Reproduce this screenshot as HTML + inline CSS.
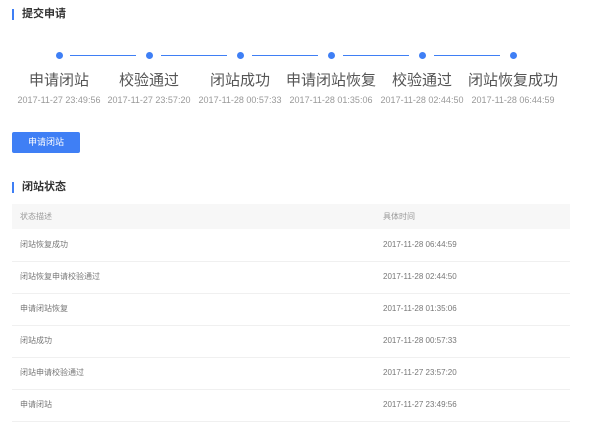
<!DOCTYPE html><html><head><meta charset="utf-8"><style>
body{margin:0;width:600px;height:430px;background:#fff;font-family:"Liberation Sans","Noto Sans CJK SC",sans-serif;position:relative;overflow:hidden}
.a{position:absolute}
.bar{position:absolute;left:12px;width:2px;height:11px;background:#3f7ff5}
.t{position:absolute;left:22px;font-size:11px;font-weight:bold;color:#333;line-height:14px}
.dot{position:absolute;width:7px;height:7px;border-radius:50%;background:#3f7ff5;top:52px}
.ln{position:absolute;height:1px;background:#3f7ff5;top:55px;width:66px}
.lb{position:absolute;width:120px;text-align:center;font-size:15px;color:#555;top:72px;line-height:18px}
.dt{position:absolute;width:120px;text-align:center;font-size:9px;color:#999;top:95px;line-height:11px}
.row{position:absolute;left:12px;width:558px;height:32px;border-bottom:1px solid #f0f0f0;font-size:8px;color:#777;line-height:32px}
.row span{position:absolute;left:8px}.row b{position:absolute;left:371px;font-weight:normal}
</style></head><body>
<div class="bar" style="top:9px"></div><div class="t" style="top:7px">提交申请</div>
<div class="dot" style="left:56px"></div><div class="dot" style="left:146px"></div><div class="dot" style="left:237px"></div><div class="dot" style="left:328px"></div><div class="dot" style="left:419px"></div><div class="dot" style="left:510px"></div>
<div class="ln" style="left:70px"></div><div class="ln" style="left:161px"></div><div class="ln" style="left:252px"></div><div class="ln" style="left:343px"></div><div class="ln" style="left:434px"></div>
<div class="lb" style="left:-1px">申请闭站</div><div class="lb" style="left:89px">校验通过</div><div class="lb" style="left:180px">闭站成功</div><div class="lb" style="left:271px">申请闭站恢复</div><div class="lb" style="left:362px">校验通过</div><div class="lb" style="left:453px">闭站恢复成功</div>
<div class="dt" style="left:-1px">2017-11-27 23:49:56</div><div class="dt" style="left:89px">2017-11-27 23:57:20</div><div class="dt" style="left:180px">2017-11-28 00:57:33</div><div class="dt" style="left:271px">2017-11-28 01:35:06</div><div class="dt" style="left:362px">2017-11-28 02:44:50</div><div class="dt" style="left:453px">2017-11-28 06:44:59</div>
<div class="a" style="left:12px;top:132px;width:68px;height:21px;background:#3f7ff5;border-radius:2px;color:#fff;font-size:9px;line-height:21px;text-align:center">申请闭站</div>
<div class="bar" style="top:182px"></div><div class="t" style="top:180px">闭站状态</div>
<div class="row" style="top:204px;height:25px;line-height:25px;background:#f7f7f7;border:none;color:#999"><span>状态描述</span><b>具体时间</b></div>
<div class="row" style="top:229px"><span>闭站恢复成功</span><b>2017-11-28 06:44:59</b></div>
<div class="row" style="top:261px"><span>闭站恢复申请校验通过</span><b>2017-11-28 02:44:50</b></div>
<div class="row" style="top:293px"><span>申请闭站恢复</span><b>2017-11-28 01:35:06</b></div>
<div class="row" style="top:325px"><span>闭站成功</span><b>2017-11-28 00:57:33</b></div>
<div class="row" style="top:357px"><span>闭站申请校验通过</span><b>2017-11-27 23:57:20</b></div>
<div class="row" style="top:389px"><span>申请闭站</span><b>2017-11-27 23:49:56</b></div>
</body></html>
